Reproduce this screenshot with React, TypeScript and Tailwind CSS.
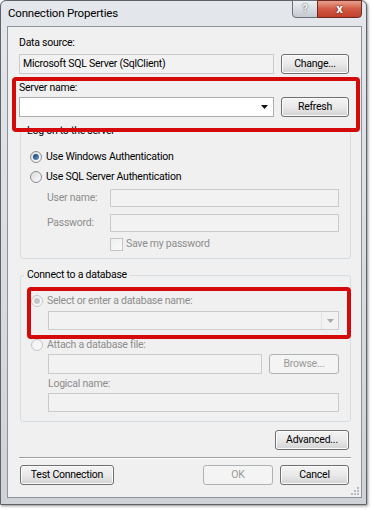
import type { ReactNode } from "react";

const font = "font-['Segoe_UI',Roboto,sans-serif]";

function Button({ label, width, disabled }: { label: string; width: string; disabled?: boolean }) {
    if (disabled) {
        return (
            <div className={`${width} h-[20px] flex items-center justify-center rounded-[3px] border border-[#adb2b5] bg-[#f4f4f4] text-[#9a9a9a]`}>
                {label}
            </div>
        );
    }
    return (
        <div className={`${width} h-[20px] flex items-center justify-center rounded-[3px] border border-[#707070] bg-linear-to-b from-[#f4f4f4] via-[#e9e9e9] to-[#d3d3d3] shadow-[inset_0_0_0_1px_#fbfbfb] text-black`}>
            {label}
        </div>
    );
}

function TextBox({ className, disabled, children }: { className: string; disabled?: boolean; children?: ReactNode }) {
    return (
        <div
            className={`${className} flex items-center border ${
                disabled ? "border-[#c9cbcf] bg-[#f2f2f2]" : "border-[#abadb3] bg-white"
            }`}
        >
            {children}
        </div>
    );
}

function Radio({ checked, disabled, label }: { checked?: boolean; disabled?: boolean; label: string }) {
    return (
        <div className="flex items-center h-[16px] gap-[4px]">
            <div
                className={`w-[12px] h-[12px] rounded-full border flex items-center justify-center ${
                    disabled
                        ? "border-[#c5c5c5] bg-linear-to-br from-[#f1f1f1] to-[#f9f9f9]"
                        : "border-[#8a8d91] bg-linear-to-br from-[#dcdcdc] to-[#fbfbfb]"
                }`}
            >
                {checked && (
                    <div
                        className={`w-[6px] h-[6px] rounded-full ${
                            disabled ? "bg-[#c4c4c4]" : "bg-linear-to-br from-[#12386b] to-[#6a9fd3]"
                        }`}
                    />
                )}
            </div>
            <span className={disabled ? "text-[#8d8d8d]" : "text-black"}>{label}</span>
        </div>
    );
}

function GroupBox({ title, className, legendShift, children }: { title: string; className: string; legendShift: string; children: ReactNode }) {
    return (
        <fieldset className={`ml-px border border-[#d5dde3] rounded-[3px] ${className}`}>
            <legend className={`${legendShift} px-[3px] h-[16px] leading-[16px] text-black`}>{title}</legend>
            {children}
        </fieldset>
    );
}

export default function App() {
    return (
        <div className={`w-[372px] h-[510px] bg-white text-[10.5px] tracking-[-0.25px] leading-[16px] ${font}`}>
            <div className="relative w-[367px] h-[505px] flex flex-col rounded-t-[6px] border border-[#5f6267] bg-linear-to-b from-[#e4e7eb] to-[#cfd3d8] shadow-[1px_1px_3px_rgba(0,0,0,0.45)]">
                {/* title bar */}
                <div className="h-[25px] flex items-start justify-between">
                    <span className="mt-[4px] ml-[7px] text-[11.5px] tracking-[-0.2px] text-black">Connection Properties</span>
                    <div className="flex mr-[4px] -mt-px">
                        <div className="w-[26px] h-[18px] flex items-center justify-center rounded-bl-[4px] border border-[#6a717b] bg-linear-to-b from-[#eef0f3] via-[#d9dde2] to-[#c5cad1] text-[11px] font-bold text-[#f7f7f7] [text-shadow:0_0_2px_#2c3440]">
                            ?
                        </div>
                        <div className="w-[45px] h-[18px] -ml-px flex items-center justify-center rounded-br-[4px] border border-[#6b2a22] bg-linear-to-b from-[#e8a08e] via-[#d25a45] to-[#c0402b] text-[13px] font-bold text-white [text-shadow:0_0_2px_#3a0d08]">
                            x
                        </div>
                    </div>
                </div>

                {/* client area */}
                <div className="relative ml-[6px] mr-[4px] h-[472px] border border-[#8c9399] bg-[#f0f0f0] pl-[11px] pr-[10px] pt-[8px] flex flex-col">
                    <div className="h-[16px]">Data source:</div>
                    <div className="mt-[3px] h-[20px] flex justify-between pr-[2px]">
                        <TextBox className="w-[255px] h-[20px] px-[3px]" disabled>
                            <span className="text-black">Microsoft SQL Server (SqlClient)</span>
                        </TextBox>
                        <Button label="Change..." width="w-[68px]" />
                    </div>

                    <div className="mt-[6px] h-[16px]">Server name:</div>
                    <div className="mt-[1px] h-[20px] flex justify-between pr-[2px]">
                        <TextBox className="w-[255px] h-[20px] justify-end pr-[5px]">
                            <svg width="7" height="4" viewBox="0 0 7 4">
                                <path d="M0 0h7L3.5 4z" fill="#111" />
                            </svg>
                        </TextBox>
                        <Button label="Refresh" width="w-[68px]" />
                    </div>

                    <GroupBox title="Log on to the server" legendShift="-ml-[6px]" className="mt-[6px] h-[136px] pl-[9px] pr-[11px]">
                        <div className="mt-[10px]">
                            <Radio checked label="Use Windows Authentication" />
                        </div>
                        <div className="mt-[4px]">
                            <Radio label="Use SQL Server Authentication" />
                        </div>
                        <div className="mt-[4px] h-[18px] flex items-center">
                            <span className="w-[80px] pl-[17px] text-[#8d8d8d]">User name:</span>
                            <TextBox className="flex-1 h-[18px]" disabled />
                        </div>
                        <div className="mt-[7px] h-[18px] flex items-center">
                            <span className="w-[80px] pl-[17px] text-[#8d8d8d]">Password:</span>
                            <TextBox className="flex-1 h-[18px]" disabled />
                        </div>
                        <div className="mt-[5px] h-[14px] flex items-center pl-[80px] gap-[3px]">
                            <div className="w-[13px] h-[13px] border border-[#c2c4c6] bg-linear-to-br from-[#efefef] to-[#fafafa]" />
                            <span className="text-[#8d8d8d]">Save my password</span>
                        </div>
                    </GroupBox>

                    <GroupBox title="Connect to a database" legendShift="-ml-[7px]" className="mt-[8px] h-[155px] pl-[10px] pr-[11px]">
                        <div className="mt-[10px]">
                            <Radio checked disabled label="Select or enter a database name:" />
                        </div>
                        <div className="mt-[2px] pl-[17px]">
                            <TextBox className="h-[19px] justify-end" disabled>
                                <div className="h-full w-[17px] flex items-center justify-center border-l border-[#e2e2e2]">
                                    <svg width="7" height="4" viewBox="0 0 7 4">
                                        <path d="M0 0h7L3.5 4z" fill="#a8a8a8" />
                                    </svg>
                                </div>
                            </TextBox>
                        </div>
                        <div className="mt-[7px]">
                            <Radio disabled label="Attach a database file:" />
                        </div>
                        <div className="mt-px pl-[17px] flex justify-between h-[20px]">
                            <TextBox className="w-[214px] h-[20px]" disabled />
                            <Button label="Browse..." width="w-[70px]" disabled />
                        </div>
                        <div className="mt-[2px] pl-[17px] h-[16px] text-[#8d8d8d]">Logical name:</div>
                        <div className="mt-px pl-[17px]">
                            <TextBox className="h-[19px]" disabled />
                        </div>
                    </GroupBox>

                    <div className="mt-[8px] flex justify-end pr-[2px]">
                        <Button label="Advanced..." width="w-[74px]" />
                    </div>

                    <div className="mt-[7px] h-[2px] border-t border-[#a0a0a0] border-b border-b-white" />

                    <div className="mt-[6px] flex items-center pr-[2px]">
                        <div className="ml-px">
                            <Button label="Test Connection" width="w-[94px]" />
                        </div>
                        <div className="ml-auto">
                            <Button label="OK" width="w-[70px]" disabled />
                        </div>
                        <div className="ml-[7px]">
                            <Button label="Cancel" width="w-[69px]" />
                        </div>
                    </div>

                    {/* size grip */}
                    <svg className="absolute right-[1px] bottom-[1px]" width="10" height="10" viewBox="0 0 10 10">
                        <g fill="#b8bcc0">
                            <rect x="7" y="1" width="2" height="2" />
                            <rect x="4" y="4" width="2" height="2" />
                            <rect x="7" y="4" width="2" height="2" />
                            <rect x="1" y="7" width="2" height="2" />
                            <rect x="4" y="7" width="2" height="2" />
                            <rect x="7" y="7" width="2" height="2" />
                        </g>
                    </svg>
                </div>

                {/* annotation boxes */}
                <div className="absolute left-[11px] top-[76px] w-[348px] h-[55px] rounded-[4px] border-[4px] border-[#d40a0a]" />
                <div className="absolute left-[26px] top-[286px] w-[324px] h-[52px] rounded-[4px] border-[4px] border-[#d40a0a]" />
            </div>
        </div>
    );
}
